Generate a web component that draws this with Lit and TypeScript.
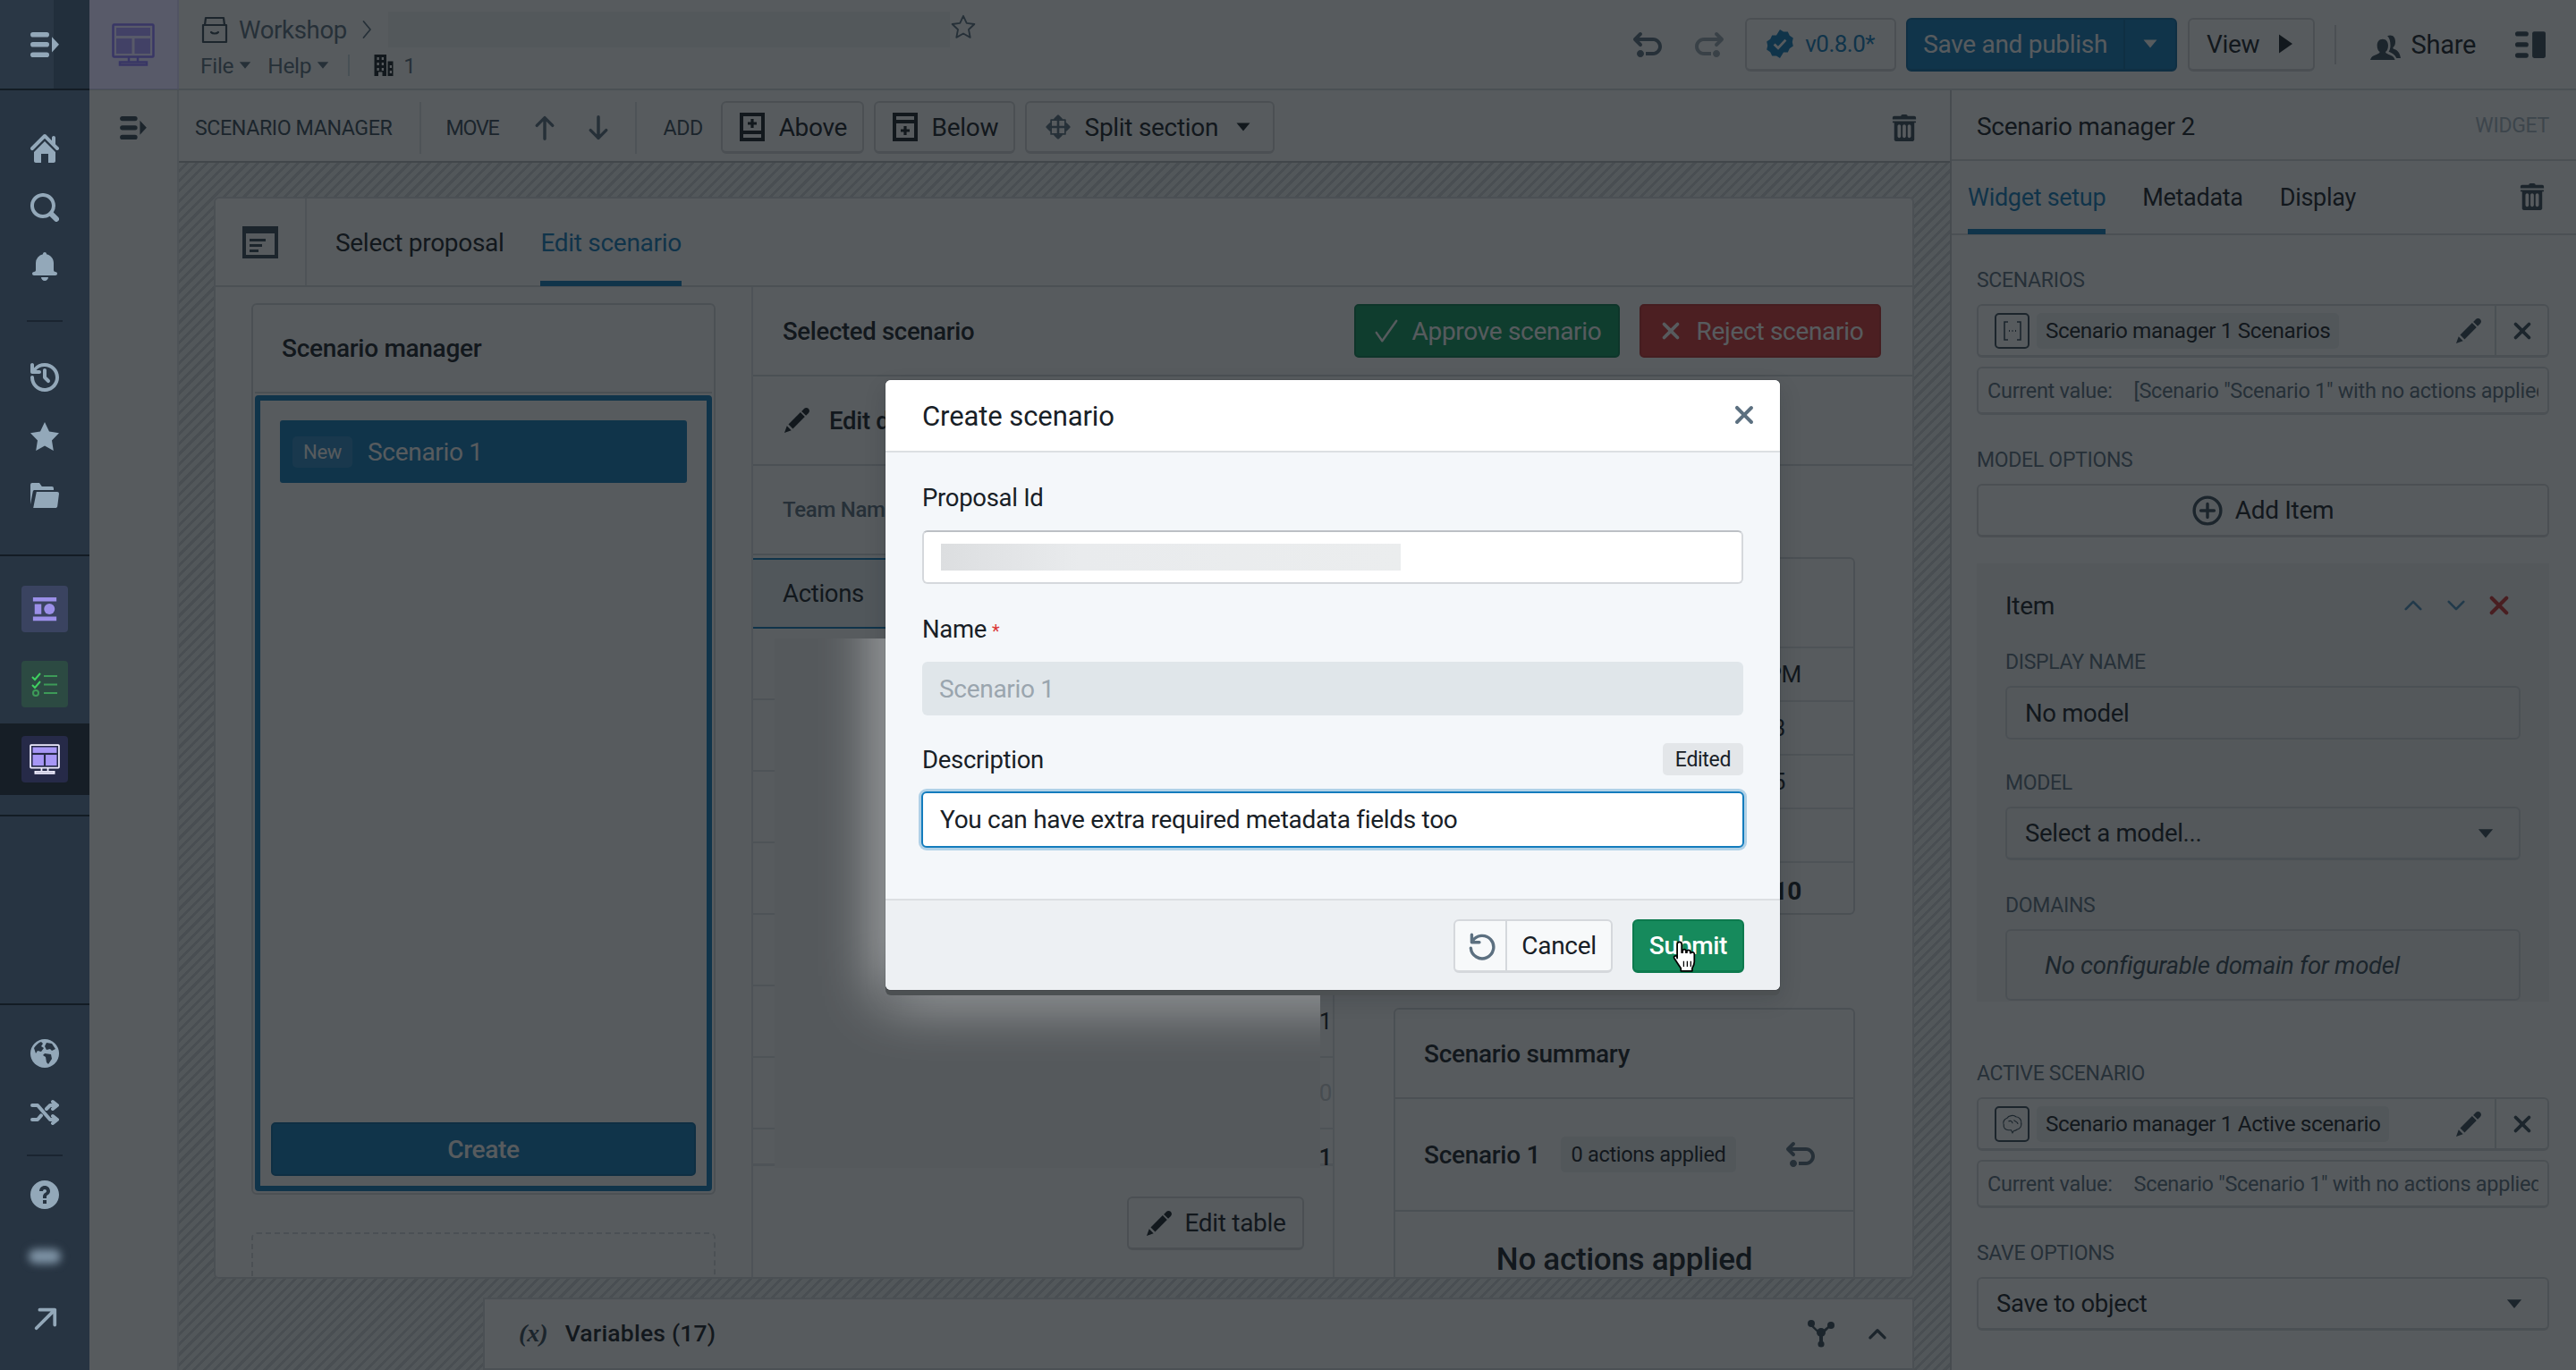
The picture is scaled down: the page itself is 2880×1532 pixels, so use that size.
import { LitElement, html, css } from "lit";
import { customElement } from "lit/decorators.js";

const P: Record<string, string> = {
  home: "M2 10v5c0 .55.45 1 1 1h3v-5h4v5h3c.55 0 1-.45 1-1v-5L8 4l-6 6zm13.71-2.71L14 5.59V2c0-.55-.45-1-1-1s-1 .45-1 1v1.59L8.71.29C8.53.11 8.28 0 8 0s-.53.11-.71.29l-7 7a1.003 1.003 0 001.42 1.42L8 2.41l6.29 6.29c.18.19.43.3.71.3a1.003 1.003 0 00.71-1.71z",
  search: "M15.55 13.43l-2.67-2.68a6.94 6.94 0 001.11-3.76c0-3.87-3.13-7-7-7s-7 3.13-7 7 3.13 7 7 7c1.39 0 2.68-.42 3.76-1.11l2.68 2.67a1.498 1.498 0 102.12-2.12zm-8.56-1.44c-2.76 0-5-2.24-5-5s2.24-5 5-5 5 2.24 5 5-2.24 5-5 5z",
  bell: "M8 16c1.1 0 2-.9 2-2H6c0 1.1.9 2 2 2zm6-5c-.55 0-1-.45-1-1V6c0-2.43-1.73-4.45-4.02-4.9 0-.04.02-.06.02-.1 0-.55-.45-1-1-1S7 .45 7 1c0 .04.02.06.02.1A4.992 4.992 0 003 6v4c0 .55-.45 1-1 1s-1 .45-1 1 .45 1 1 1h12c.55 0 1-.45 1-1s-.45-1-1-1z",
  history: "M8 3c-.55 0-1 .45-1 1v4c0 .28.11.53.29.71l2 2a1.003 1.003 0 001.42-1.42L9 7.59V4c0-.55-.45-1-1-1zm0-3a7.95 7.95 0 00-6 2.74V1c0-.55-.45-1-1-1S0 .45 0 1v4c0 .55.45 1 1 1h4c.55 0 1-.45 1-1s-.45-1-1-1H3.27A5.96 5.96 0 018 2c3.31 0 6 2.69 6 6 0 2.97-2.16 5.43-5 5.9v-.01c-.33.05-.66.11-1 .11-3.31 0-6-2.69-6-6 0-.55-.45-1-1-1s-1 .45-1 1c0 4.42 3.58 8 8 8 .34 0 .67-.06 1-.1v.04c3.94-.49 7-3.84 7-7.94 0-4.42-3.58-8-8-8z",
  star: "M8 0l2.5 5.3 5.5.8-4 4.1.9 5.8L8 13.3 3.1 16l.9-5.8-4-4.1 5.5-.8z",
  folder: "M2 5h11V4a1 1 0 00-1-1H6.4L5 1H1a1 1 0 00-1 1v11l1.4-7.2A1 1 0 012 5zm13 1H3.4L1.6 15H14c.5 0 1-.4 1.1-.9L16 7a1 1 0 00-1-1z",
  help: "M8 0C3.58 0 0 3.58 0 8s3.58 8 8 8 8-3.58 8-8-3.58-8-8-8zM7 13h2v-2H7v2zm1-10C6.3 3 5 4.3 5 6h2c0-.6.4-1 1-1s1 .4 1 1c0 1-2 1-2 3v1h2V9c0-1 2-1 2-3 0-1.7-1.3-3-3-3z",
  undo: "M4 11c-1.1 0-2 .9-2 2s.9 2 2 2 2-.9 2-2-.9-2-2-2zm7-7H3.41L4.7 2.71c.19-.18.3-.43.3-.71a1.003 1.003 0 00-1.71-.71l-3 3C.11 4.47 0 4.72 0 5c0 .28.11.53.29.71l3 3a1.003 1.003 0 001.42-1.42L3.41 6H11c1.65 0 3 1.35 3 3s-1.35 3-3 3H7v2h4c2.76 0 5-2.24 5-5s-2.24-5-5-5z",
  pencil: "M3.25 10.26l2.47 2.47 6.69-6.69-2.46-2.48-6.7 6.7zM.99 14.99l3.86-1.39-2.46-2.44-1.4 3.83zm12.25-14c-.48 0-.92.2-1.24.51l-1.44 1.44 2.47 2.47 1.44-1.44c.32-.32.51-.75.51-1.24.01-.95-.77-1.74-1.74-1.74z",
  trash: "M14.49 3.99h-13c-.28 0-.5.22-.5.5s.22.5.5.5h.5v10c0 .55.45 1 1 1h10c.55 0 1-.45 1-1v-10h.5c.28 0 .5-.22.5-.5s-.22-.5-.5-.5zm-8.5 9c0 .55-.45 1-1 1s-1-.45-1-1v-6c0-.55.45-1 1-1s1 .45 1 1v6zm3 0c0 .55-.45 1-1 1s-1-.45-1-1v-6c0-.55.45-1 1-1s1 .45 1 1v6zm3 0c0 .55-.45 1-1 1s-1-.45-1-1v-6c0-.55.45-1 1-1s1 .45 1 1v6zm2-12h-4c0-.55-.45-1-1-1h-2c-.55 0-1 .45-1 1h-4c-.55 0-1 .45-1 1v1h14v-1c0-.55-.45-1-1-1z",
  close: "M9.41 8l3.29-3.29c.19-.18.3-.43.3-.71a1.003 1.003 0 00-1.71-.71L8 6.59l-3.29-3.3a1.003 1.003 0 00-1.42 1.42L6.59 8 3.3 11.29c-.19.18-.3.43-.3.71a1.003 1.003 0 001.71.71L8 9.41l3.29 3.29c.18.19.43.3.71.3a1.003 1.003 0 00.71-1.71L9.41 8z",
  caret: "M3 5h10L8 11z",
  play: "M4 1l10 7-10 7z",
  people: "M9.5 13c-.5-.2-1.3-.3-1.5-1.2.9-.5 1.4-1.8 1.4-3.3C9.4 6.300 8.300 5 6.500 5S3.600 6.300 3.600 8.500c0 1.500.5 2.800 1.400 3.300-.2.9-1 1-1.500 1.200C2 13.600.5 14 0 16h13c-.5-2-2-2.400-3.500-3zM13 10.500c-.5-.2-1-.3-1.100-1 .8-.5 1.300-1.600 1.300-3C13.200 4.300 12.200 3 10.500 3c-.6 0-1.100.1-1.500.4 1 1 1.600 2.500 1.600 5 0 1.300-.3 2.400-.9 3.300 1.800.7 3.300 1.700 4.100 3.300H16c-.4-2.500-1.500-3.900-3-4.500z",
  building: "M1 0h9v16H7v-3H4v3H1zM3 2v2h1.500V2zm3.500 0v2H8V2zM3 6v2h1.500V6zm3.500 0v2H8V6zM3 10v2h1.500v-2zm3.500 0v2H8v-2zM11 5h4v11h-4zM12.500 8v2H14V8zm0 4v2H14v-2z",
  badge: "M8 0l2 1.300 2.400-.1 1 2.200 2 1.300-.5 2.300.5 2.300-2 1.300-1 2.200-2.400-.1L8 16l-2-1.300-2.400.1-1-2.200-2-1.300.5-2.300-.5-2.300 2-1.300 1-2.200 2.400.1z",
};

const icon = (n: string, cls = "") =>
  html`<svg class="ic ${cls}" viewBox="0 0 16 16"><path fill-rule="evenodd" d=${P[n]}></path></svg>`;

const drawer = (cls = "") => html`<svg class="ic ${cls}" viewBox="0 0 16 14">
  <rect x="0" y="0" width="10.500" height="2.800" rx="1.400"></rect>
  <rect x="0" y="5.500" width="10.500" height="2.800" rx="1.400"></rect>
  <rect x="0" y="11.200" width="10.500" height="2.800" rx="1.400"></rect>
  <path d="M12 2.600 L16 6.900 L12 11.200z"></path></svg>`;

const monitor = (cls = "") => html`<svg class="mon ${cls}" viewBox="0 0 48 48">
  <rect class="o" x="1.500" y="1.500" width="45" height="36" rx="1"></rect>
  <rect class="f" x="5" y="5" width="38" height="9"></rect>
  <rect class="f" x="5" y="17" width="17.500" height="17"></rect>
  <rect class="f" x="25.500" y="17" width="17.500" height="17"></rect>
  <path class="o" d="M19 38v5.500M29 38v5.500M9 43.500h30v3H9z"></path></svg>`;

const strokes = (d: string, cls = "", w = 2) =>
  html`<svg class="st ${cls}" viewBox="0 0 16 16" stroke-width=${w}><path d=${d}></path></svg>`;

const addIcon = (below: boolean) => html`<svg class="ic s32" viewBox="0 0 16 16">
  <path fill-rule="evenodd" d=${below
    ? "M1 0h14v16H1zM3 6v8h10V6zM3 2v2h10V2z M7.200 7.500h1.600v1.700h1.700v1.600H8.800v1.700H7.200v-1.700H5.500V9.200h1.700z"
    : "M1 0h14v16H1zM3 2v8h10V2zM3 12v2h10v-2z M7.200 3.500h1.600v1.700h1.700v1.600H8.800v1.700H7.200V6.800H5.500V5.200h1.700z"}></path></svg>`;

@customElement("app-root")
export class AppRoot extends LitElement {
  static styles = css`
    :host { display: flex; width: 2880px; height: 1532px; overflow: hidden; background: #fff; color: #182026;
      font-family: "Roboto", "Liberation Sans", sans-serif; font-size: 28px; letter-spacing: -0.3px; }
    * { box-sizing: border-box; }
    .ic { fill: currentColor; flex: none; display: block; width: 28px; height: 28px; }
    .st { fill: none; stroke: currentColor; stroke-linecap: round; stroke-linejoin: round; flex: none; display: block; width: 28px; height: 28px; }
    .s16 { width: 16px; height: 16px; } .s20 { width: 20px; height: 20px; } .s24 { width: 24px; height: 24px; }
    .s30 { width: 30px; height: 30px; } .s32 { width: 32px; height: 32px; }
    .flip { transform: scaleX(-1); }

    .rail { width: 100px; flex: none; background: #273442; color: #93a8b9; display: flex; flex-direction: column; align-items: center; }
    .rail-top { height: 101px; width: 100%; border-bottom: 2px solid #131c24; display: flex; align-items: center; justify-content: center; background: linear-gradient(90deg, #2a3745 60%, #222f3c 60%); }
    .rail-top .ic { width: 32px; height: 28px; }
    .rail-sec { width: 100%; display: flex; flex-direction: column; align-items: center; }
    .nav { height: 66px; display: flex; align-items: center; justify-content: center; width: 100%; }
    .nav .ic { width: 32px; height: 32px; }
    .r-sep { width: 40px; height: 2px; background: #1a2430; margin: 2px 0; }
    .r-line { width: 100%; height: 2px; background: #131c24; }
    .tile { width: 52px; height: 52px; border-radius: 4px; display: flex; align-items: center; justify-content: center; }
    .t-purple { background: #3a4360; color: #9b8fe8; }
    .t-green { background: #2c4a42; }
    .t-active { background: #262a48; }
    .active-row { width: 100%; height: 80px; background: #161e26; display: flex; align-items: center; justify-content: center; }
    .blur-dot { width: 36px; height: 16px; border-radius: 8px; background: #7e93a5; filter: blur(5px); }

    .main { flex: 1; min-width: 0; position: relative; display: flex; flex-direction: column; }
    .header { height: 101px; border-bottom: 2px solid #d8dbde; display: flex; align-items: stretch; flex: none; }
    .logo { width: 100px; border-right: 2px solid #e4e4ea; display: flex; align-items: center; justify-content: center; }
    .mon { width: 48px; height: 48px; display: block; }
    .mon .o { fill: none; stroke: #8b7cf0; stroke-width: 2.500; }
    .mon .f { fill: #8b7cf0; opacity: .7; }
    .mon.s-mon { width: 34px; height: 34px; }
    .s-mon .o { stroke: #efedff; }
    .s-mon .f { fill: #a797f5; opacity: 1; }
    .crumbs { padding: 15px 0 0 24px; display: flex; flex-direction: column; gap: 7px; color: #5c7080; width: 862px; flex: none; }
    .crumb1 { display: flex; align-items: center; gap: 11px; height: 36px; font-size: 27.500px; }
    .crumb2 { display: flex; align-items: center; gap: 6px; height: 30px; font-size: 24.500px; }
    .crumb2 .b { display: flex; align-items: center; margin-right: 9px; gap: 3px; }
    .crumb2 .vs { width: 2px; height: 24px; background: #ced9e0; margin: 0 20px 0 3px; }
    .crumb2 .bd { color: #182026; }
    .crumb2 .one { margin-left: 4px; }
    .box-ic { width: 32px; height: 32px; color: #394b59; }
    .hblur { flex: 1; height: 40px; background: #f2f3f4; }
    .star-wrap { width: 30px; flex: none; display: flex; justify-content: center; padding-top: 15px; color: #5c7080; }
    .hright { margin-left: auto; display: flex; align-items: center; padding-right: 34px; }
    .btn { display: flex; align-items: center; justify-content: center; border: 2px solid #d5d8db; border-bottom-width: 3px; border-radius: 6px; background: #fff; height: 60px; gap: 12px; font-size: 28px; flex: none; }
    .gh { color: #5c7080; margin-right: 37px; }
    .gh.flip { opacity: .6; margin-right: 0; }
    .ver { width: 169px; color: #137cbd; margin-left: 24px; gap: 12px; letter-spacing: -0.5px; font-size: 26px; }
    .primary { width: 303px; margin-left: 11px; background: #137cbd; color: #fff; border-color: #106ba3; padding: 0; justify-content: flex-start; gap: 0; overflow: hidden; }
    .primary .t { flex: 1; text-align: center; }
    .primary .c { width: 58px; align-self: stretch; border-left: 2px solid #106ba3; display: flex; align-items: center; justify-content: center; }
    .view { width: 142px; margin-left: 12px; gap: 16px; }
    .hvs { width: 2px; height: 44px; background: #d5d8db; margin: 0 38px 0 22px; }
    .share { display: flex; align-items: center; gap: 12px; margin-right: 44px; font-size: 29px; }
    .share .ic { color: #394b59; width: 34px; height: 34px; }
    .panel-ic { color: #394b59; width: 34px; height: 30px; }

    .body { flex: 1; display: flex; min-height: 0; }
    .col2 { width: 100px; flex: none; border-right: 2px solid #e1e4e6; display: flex; justify-content: center; padding-top: 29px; color: #394b59; }
    .col2 .ic { width: 32px; height: 26px; }
    .center { width: 1980px; flex: none; display: flex; flex-direction: column; min-height: 0; }
    .tools { height: 79px; flex: none; display: flex; align-items: center; padding: 4px 36px 0 18px; color: #394b59; }
    .tlabel { font-size: 23.200px; letter-spacing: -0.4px; color: #394b59; }
    .mv { letter-spacing: -1.200px; }
    .tsep { width: 2px; height: 58px; background: #e1e4e6; margin: 0 31px; flex: none; }
    .tsep.s1 { margin-right: 27px; }
    .tsep.s2 { margin-left: 27px; margin-right: 30px; }
    .tools .st { width: 28px; height: 28px; color: #5c7080; }
    .g37 { width: 37px; flex: none; } .g32 { width: 32px; flex: none; }
    .tbtn { height: 59px; margin-right: 11px; color: #182026; gap: 14px; }
    .ca { width: 160px; margin-left: 20px; } .cb { width: 158px; } .cc { width: 279px; color: #182026; gap: 16px; }
    .tools .trash { margin-left: auto; width: 30px; height: 32px; color: #394b59; }
    .canvas { flex: 1; min-height: 0; padding: 38px 40px 0 39px; display: flex; flex-direction: column; gap: 21px; overflow: hidden;
      border-top: 2px solid #b5b9bd;
      background: repeating-linear-gradient(135deg, #eff0f1 0 5px, #d0d3d6 5px 8px); }
    .card { height: 1210px; flex: none; background: #fff; border: 2px solid #d8dbde; border-radius: 6px; display: flex; flex-direction: column; overflow: hidden; }
    .card-tabs { height: 99px; flex: none; border-bottom: 2px solid #d8dbde; display: flex; }
    .form-ic { width: 102px; border-right: 2px solid #e1e4e6; display: flex; align-items: center; justify-content: center; color: #394b59; }
    .form-svg { width: 40px; height: 36px; }
    .tab { display: flex; align-items: center; height: 100%; padding-top: 2px; font-size: 28px; position: relative; flex: none; }
    .tab1 { margin-left: 32px; } .tab2 { margin-left: 41px; color: #137cbd; }
    .tab2::after, .rt-act::after { content: ""; position: absolute; left: 0; right: 0; bottom: -1px; height: 6px; background: #137cbd; }
    .card-body { flex: 1; display: flex; min-height: 0; }
    .cl { width: 601px; flex: none; border-right: 2px solid #e1e4e6; padding: 18px 40px 0 40px; display: flex; flex-direction: column; gap: 42px; }
    .sm { height: 997px; flex: none; border: 2px solid #d8dbde; border-radius: 6px; display: flex; flex-direction: column; padding: 0 2px 2px; }
    .sm-h { height: 99px; flex: none; display: flex; align-items: center; padding-left: 30px; font-weight: 500; font-size: 28px; border-bottom: 2px solid #d8dbde; }
    .focus { flex: 1; margin-top: 2px; border: 6px solid #137cbd; border-radius: 4px; padding: 22px 12px 11px; display: flex; flex-direction: column; justify-content: space-between; }
    .row { margin: 0 10px; height: 70px; background: #137cbd; border-radius: 3px; color: #fff; display: flex; align-items: center; padding-left: 14px; gap: 17px; font-size: 28px; }
    .new { font-size: 22px; padding: 5px 12px; background: rgba(255,255,255,.12); border-radius: 5px; }
    .create { height: 60px; background: #137cbd; border: 2px solid #106ba3; border-radius: 5px; color: #fff; display: flex; align-items: center; justify-content: center; font-size: 28px; font-weight: 500; }
    .dash { height: 200px; flex: none; border: 2px dashed #d8dbde; border-radius: 6px; display: flex; justify-content: center; padding-top: 44px; font-size: 26px; }
    .cr { flex: 1; min-width: 0; display: flex; flex-direction: column; }
    .cr-r { flex: none; display: flex; align-items: center; padding-left: 33px; border-bottom: 2px solid #d8dbde; }
    .h100 { height: 100px; } .team { height: 100px; color: #5c7080; font-size: 24px; font-weight: 500; }
    .strong { font-weight: 500; font-size: 27.500px; }
    .ed { margin-left: 20px; }
    .appr { margin-left: auto; height: 60px; width: 297px; background: #0f9960; color: #fff; border: 2px solid #0d8050; border-radius: 5px; display: flex; align-items: center; justify-content: center; gap: 14px; font-size: 28px; white-space: nowrap; }
    .rej { margin: 0 35px 0 22px; height: 60px; width: 270px; background: #db3737; color: #fff; border: 2px solid #c23030; border-radius: 5px; display: flex; align-items: center; justify-content: center; gap: 14px; font-size: 28px; white-space: nowrap; }
    .cr-b { flex: 1; display: flex; min-height: 0; }
    .tbl { width: 650px; flex: none; border-right: 2px solid #e1e4e6; display: flex; flex-direction: column; }
    .gap3 { height: 3px; flex: none; }
    .acts { height: 79px; flex: none; border-top: 2px solid #137cbd; border-bottom: 2px solid #137cbd; background: #ebf1f5; display: flex; align-items: center; padding-left: 33px; font-size: 27.500px; }
    .tr { height: 80px; flex: none; border-bottom: 2px solid #e1e4e6; display: flex; align-items: center; justify-content: flex-end; padding-right: 1px; font-size: 26px; }
    .tr.faint { color: #c8ccd0; }
    .tr.last { height: 41px; align-items: flex-start; padding-top: 16px; border-bottom-width: 3px; font-weight: 500; }
    .edit-t { align-self: flex-end; margin: 34px 32px 0 0; width: 198px; height: 60px; gap: 12px; }
    .sc { flex: 1; padding: 102px 64px 0 66px; display: flex; flex-direction: column; gap: 104px; }
    .pn { border: 2px solid #d8dbde; border-radius: 6px; flex: none; }
    .pn1 { height: 400px; overflow: hidden; }
    .pr { height: 60px; border-bottom: 2px solid #e1e4e6; display: flex; align-items: center; justify-content: flex-end; padding-right: 58px; font-size: 26px; }
    .pr.h { height: 100px; } .pr.a { padding-right: 76px; } .pr.t { font-weight: 700; height: 62px; border: 0; font-size: 28px; }
    .pn2 { height: 400px; }
    .pn2 .a { height: 100px; display: flex; align-items: center; padding-left: 32px; border-bottom: 2px solid #d8dbde; font-weight: 500; font-size: 28px; }
    .pn2 .b { height: 126px; display: flex; align-items: center; padding-left: 32px; border-bottom: 2px solid #d8dbde; font-weight: 500; font-size: 28px; }
    .tagc { margin-left: 23px; height: 40px; width: 196px; background: #eef0f2; border-radius: 5px; font-size: 23.500px; font-weight: 400; display: flex; align-items: center; justify-content: center; white-space: nowrap; }
    .pn2 .ic { margin-left: 56px; width: 32px; height: 32px; color: #5c7080; }
    .pn2 .c { text-align: center; font-weight: 500; font-size: 35px; padding-top: 33px; }
    .vars { width: 1600px; height: 81px; flex: none; align-self: flex-end; background: #fff; border: 2px solid #d8dbde; display: flex; align-items: center; padding: 0 26px 2px 38px; }
    .vx { font-family: "Liberation Serif", serif; font-style: italic; font-weight: 700; font-size: 28px; margin-right: 19px; color: #394b59; letter-spacing: 0; }
    .vt { font-weight: 500; font-size: 26.500px; letter-spacing: .2px; }
    .vars .hub { margin-left: auto; color: #394b59; width: 32px; height: 32px; }
    .vars .st { margin-left: 34px; color: #394b59; width: 26px; height: 26px; }

    .rp { width: 700px; flex: none; min-width: 0; overflow: hidden; border-left: 2px solid #c9cdd1; display: flex; flex-direction: column; min-height: 0; }
    .rp-h { height: 79px; flex: none; border-bottom: 2px solid #d8dbde; display: flex; align-items: center; padding: 4px 30px 0 28px; font-size: 28px; }
    .rp-h .w { margin-left: auto; color: #a7b6c2; font-size: 23px; margin-top: -2px; }
    .rp-t { height: 83px; flex: none; display: flex; border-bottom: 2px solid #d8dbde; padding-left: 18px; align-items: stretch; font-size: 27px; }
    .rt { display: flex; align-items: center; position: relative; margin-right: 41px; padding-bottom: 0; }
    .rt-act { color: #137cbd; }
    .rp-t .ic { margin: 24px 34px 0 auto; width: 30px; height: 32px; color: #394b59; }
    .rp-c { padding: 39px 30px 0 28px; display: flex; flex-direction: column; min-width: 0; }
    .lb { height: 24px; line-height: 24px; font-size: 23px; color: #5c7080; letter-spacing: -0.3px; margin-bottom: 14px; }
    .mt39 { margin-top: 39px; } .mt37 { margin-top: 37px; } .mt69 { margin-top: 69px; }
    .field { height: 60px; border: 2px solid #d8dbde; border-bottom-width: 3px; border-radius: 6px; display: flex; align-items: center; }
    .fic { width: 39px; height: 40px; border: 2px solid #394b59; border-radius: 5px; margin: 0 8px 0 18px; display: flex; align-items: center; justify-content: center; flex: none; color: #394b59; }
    .fic svg { width: 24px; height: 26px; display: block; }
    .chip { height: 40px; background: #eef0f2; border-radius: 5px; display: flex; align-items: center; padding: 0 10px; font-size: 24.300px; letter-spacing: -0.4px; white-space: nowrap; }
    .fe { margin-left: auto; color: #394b59; width: 32px; height: 32px; margin-right: 13px; }
    .fx { width: 59px; align-self: stretch; border-left: 2px solid #d8dbde; display: flex; align-items: center; justify-content: center; color: #394b59; }
    .cur { margin-top: 10px; height: 54px; border: 2px solid #d8dbde; border-bottom-width: 3px; border-radius: 6px; display: flex; align-items: center; padding: 0 10px; gap: 24px; color: #5c7080; font-size: 23.500px; white-space: nowrap; overflow: hidden; letter-spacing: -0.3px; }
    .cur .ov { overflow: hidden; flex: 1; min-width: 0; }
    .addi { height: 60px; width: 100%; gap: 14px; }
    .addi .st { width: 34px; height: 34px; color: #394b59; }
    .item { margin-top: 29px; height: 490px; background: #f3f5f6; padding: 32px 32px 0 32px; display: flex; flex-direction: column; }
    .it { height: 30px; display: flex; align-items: center; font-size: 28px; }
    .it .st { width: 22px; height: 22px; margin-left: 26px; color: #4f8fbd; }
    .it .st.first { margin-left: auto; }
    .it .st.x { color: #d03535; margin-right: 13px; }
    .inp { height: 60px; border: 2px solid #d8dbde; border-radius: 6px; background: #f3f5f6; display: flex; align-items: center; padding: 0 20px; font-size: 27.500px; }
    .inp.clear { background: transparent; }
    .sel { border-bottom-width: 3px; justify-content: space-between; padding-right: 24px; }
    .sel .ic { color: #394b59; width: 26px; height: 26px; }
    .dom { height: 80px; border: 2px solid #d8dbde; border-radius: 6px; display: flex; align-items: center; padding-left: 42px; font-style: italic; color: #394b59; font-size: 27.500px; }

    .ov-layer { position: absolute; inset: 0; background: rgba(16, 22, 26, .7); display: flex; align-items: center; justify-content: center; }
    .tint { position: absolute; left: 0; top: 0; width: 100px; height: 100px; background: rgba(110, 90, 255, .07); }
    .smudge { position: absolute; left: 766px; top: 714px; width: 610px; height: 592px; overflow: hidden; background: #55595c; }
    .smudge i { position: absolute; left: 120px; top: -100px; width: 700px; height: 500px; background: rgba(255,255,255,.64); filter: blur(34px); display: block; }

    .modal { width: 1000px; height: 682px; position: relative; background: #f4f7fa; border-radius: 6px; box-shadow: 0 0 0 1px rgba(16,22,26,.1), 0 6px 0 #4c5052, 0 10px 24px rgba(16,22,26,.15); display: flex; flex-direction: column; overflow: hidden; }
    .m-h { height: 81px; flex: none; background: #fff; border-bottom: 2px solid #dcdfe2; display: flex; align-items: center; padding: 2px 24px 0 41px; font-size: 31px; letter-spacing: -0.1px; justify-content: space-between; }
    .m-h .ic { color: #5c7080; width: 32px; height: 32px; margin-top: -4px; }
    .m-b { flex: 1; padding: 0 41px; display: flex; flex-direction: column; }
    .ml { font-size: 27.500px; height: 34px; display: flex; align-items: center; justify-content: space-between; flex: none; }
    .ml.m33 { margin-top: 33px; } .ml.m32 { margin-top: 32px; }
    .ml b { color: #db3737; font-weight: 400; font-size: 20px; margin: -8px 0 0 6px; }
    .minp { height: 60px; border: 2px solid #d5d8dc; border-top-color: #bcc0c5; background: #fff; border-radius: 6px; display: flex; align-items: center; padding-left: 19px; font-size: 28px; margin-top: 20px; flex: none; }
    .mblur { width: 514px; height: 30px; background: linear-gradient(90deg, #dcdee0, #e9ebed 30%, #ebedee); }
    .mdis { background: #e0e6ea; border: 0; color: #9aa5ae; margin-top: 20px; height: 60px; }
    .edited { font-size: 23px; height: 36px; width: 90px; background: #e3e6e9; border-radius: 5px; display: flex; align-items: center; justify-content: center; }
    .mfoc { border: 2px solid #137cbd; box-shadow: 0 0 0 3px rgba(19,124,189,.3); margin-top: 19px; height: 63px; margin-left: -1px; margin-right: -1px; padding-left: 19px; }
    .m-f { height: 102px; flex: none; background: #edf0f3; border-top: 2px solid #dcdfe2; display: flex; align-items: center; justify-content: flex-end; padding: 2px 40px 0 0; }
    .grp { width: 178px; height: 60px; display: flex; border: 2px solid #d5d8dc; border-bottom-width: 3px; border-radius: 6px; background: #f7f9fa; }
    .grp .r { width: 58px; border-right: 2px solid #d5d8dc; display: flex; align-items: center; justify-content: center; color: #5c7080; }
    .grp .r .st { width: 34px; height: 34px; }
    .grp .c { flex: 1; display: flex; align-items: center; justify-content: center; font-size: 28px; }
    .submit { width: 125px; height: 60px; margin-left: 22px; border-radius: 6px; background: #168a5c; border: 2px solid #0d7a4e; border-bottom-width: 3px; color: #fff; display: flex; align-items: center; justify-content: center; font-size: 28px; font-weight: 500; }
    .hand { position: absolute; left: 878px; top: 626px; width: 32px; height: 38px; }
  `;

  private label(t: string, cls = "") { return html`<div class="lb ${cls}">${t}</div>`; }

  private rail() {
    return html`<div class="rail">
      <div class="rail-top">${drawer()}</div>
      <div class="rail-sec" style="padding-top:32px">
        <div class="nav">${icon("home")}</div>
        <div class="nav">${icon("search")}</div>
        <div class="nav">${icon("bell")}</div>
        <div style="height:25px"></div><div class="r-sep"></div>
        <div style="height:27px"></div>
        <div class="nav">${icon("history")}</div>
        <div class="nav">${icon("star")}</div>
        <div class="nav">${icon("folder")}</div>
      </div>
      <div style="height:33px"></div><div class="r-line"></div>
      <div class="rail-sec" style="padding-top:33px;gap:32px">
        <div class="tile t-purple"><svg class="ic s30" viewBox="0 0 16 16"><path d="M1 1h14v2.500H1zM1 12.500h14V15H1zM2 5h4v6H2z"></path><circle cx="10.800" cy="8" r="3.200"></circle></svg></div>
        <div class="tile t-green"><svg viewBox="0 0 32 28" width="32" height="28" fill="none" stroke-width="2"><path d="M2 6l3 3 6-7M2 15l3 3 6-7" stroke="#3fd060"></path><circle cx="6" cy="24" r="3" stroke="#3d9a58"></circle><path d="M15 5h15M15 14.500h15M15 24h15" stroke="#3d9a58"></path></svg></div>
      </div>
      <div class="active-row" style="margin-top:18px"><div class="tile t-active">${monitor("s-mon")}</div></div>
      <div style="height:22px"></div><div class="r-line"></div>
      <div style="height:209px"></div><div class="r-line"></div>
      <div class="rail-sec" style="padding-top:21px">
        <div class="nav"><svg class="ic s32" viewBox="0 0 16 16"><circle cx="8" cy="8" r="8"></circle><path fill="#273442" d="M2 5c1-1.500 2.500-3 4-3.500l1 1-1 1.500 1.500 1L6 7 4 6.500 3 8zM9 2l3 .5 2 3-2 1-1-1-2 .5-1-2zM8 8l3.500.5L12 11l-2 3-1-1-.5-3L7 9z"></path></svg></div>
        <div class="nav">${strokes("M1 4h3l7 8h3M1 12h3l2-2.300M9 6l2-2h3M12.500 2L15 4l-2.500 2M12.500 10l2.500 2-2.500 2", "s32")}</div>
        <div style="height:12px"></div><div class="r-sep"></div>
        <div class="nav" style="margin-top:8px">${icon("help")}</div>
        <div class="nav" style="height:72px"><div class="blur-dot"></div></div>
        <div class="nav">${strokes("M3 14L14 3M5 3h9v9", "s30", 2)}</div>
      </div>
    </div>`;
  }

  private header() {
    return html`<div class="header">
      <div class="logo">${monitor()}</div>
      <div class="crumbs">
        <div class="crumb1">
          <svg class="st box-ic" viewBox="0 0 16 16" stroke-width="1.100"><path d="M1.500 5.500h13V15h-13zM2.500 5.500L3 1.500h10l.5 4M6 9.500c.8 1 3.200 1 4 0"></path></svg>
          <span>Workshop</span>${strokes("M5 2l5 6-5 6", "s24", 1.200)}
          <div class="hblur"></div>
        </div>
        <div class="crumb2">
          <span class="b">File${icon("caret", "s20")}</span>
          <span class="b">Help${icon("caret", "s20")}</span>
          <span class="vs"></span>
          <span class="bd">${icon("building", "s24")}</span><span class="one">1</span>
        </div>
      </div>
      <div class="star-wrap">${strokes("M8 1.500l2 4.300 4.600.6-3.400 3.200.9 4.700L8 12l-4.100 2.300.9-4.700L1.400 6.400 6 5.800z", "s30", 1)}</div>
      <div class="hright">
        <div class="gh">${icon("undo", "s32")}</div>
        <div class="gh flip">${icon("undo", "s32")}</div>
        <div class="btn ver">
          <svg class="ic s32" viewBox="0 0 16 16"><path d=${P.badge}></path><path d="M4.800 8.200l2.200 2.200 4.200-4.600" fill="none" stroke="#fff" stroke-width="1.400"></path></svg>
          <span>v0.8.0*</span>
        </div>
        <div class="btn primary"><span class="t">Save and publish</span><span class="c">${icon("caret", "s24")}</span></div>
        <div class="btn view"><span>View</span>${icon("play", "s24")}</div>
        <div class="hvs"></div>
        <div class="share">${icon("people")}<span>Share</span></div>
        <svg class="ic panel-ic" viewBox="0 0 16 14"><rect x="0" y="0" width="7" height="2.500" rx="1.200"></rect><rect x="0" y="5.700" width="7" height="2.500" rx="1.200"></rect><rect x="0" y="11.400" width="7" height="2.500" rx="1.200"></rect><rect x="9" y="0" width="7" height="14" rx="1"></rect></svg>
      </div>
    </div>`;
  }

  private toolbar() {
    return html`<div class="tools">
      <span class="tlabel">SCENARIO MANAGER</span><span class="tsep s1"></span>
      <span class="tlabel mv">MOVE</span>
      <span class="g37"></span>${strokes("M8 15V1.500M3 6.500l5-5 5 5")}
      <span class="g32"></span>${strokes("M8 1v13.500M3 9.500l5 5 5-5")}
      <span class="tsep s2"></span>
      <span class="tlabel">ADD</span>
      <div class="btn tbtn ca">${addIcon(false)}<span>Above</span></div>
      <div class="btn tbtn cb">${addIcon(true)}<span>Below</span></div>
      <div class="btn tbtn cc">
        <svg class="st s32" viewBox="0 0 16 16" stroke-width="1.500"><path d="M8 1v14M1 8h14M6 3l2-2 2 2M6 13l2 2 2-2M3 6L1 8l2 2M13 6l2 2-2 2"></path><rect x="3.500" y="3.500" width="9" height="9" stroke-width="1"></rect></svg>
        <span>Split section</span>${icon("caret", "s24")}
      </div>
      ${icon("trash", "trash")}
    </div>`;
  }

  private card() {
    return html`<div class="card">
      <div class="card-tabs">
        <div class="form-ic"><svg class="ic form-svg" viewBox="0 0 20 18"><path fill-rule="evenodd" d="M0 0h20v18H0zM2 4v12h16V4zM4 7h9v1.500H4zM4 10h7v1.500H4zM4 13h5v1.500H4z"></path></svg></div>
        <div class="tab tab1">Select proposal</div>
        <div class="tab tab2">Edit scenario</div>
      </div>
      <div class="card-body">
        <div class="cl">
          <div class="sm">
            <div class="sm-h">Scenario manager</div>
            <div class="focus">
              <div class="row"><span class="new">New</span><span>Scenario 1</span></div>
              <div class="create">Create</div>
            </div>
          </div>
          <div class="dash">Add widget</div>
        </div>
        <div class="cr">
          <div class="cr-r h100">
            <span class="strong">Selected scenario</span>
            <div class="appr">${strokes("M2 9l3.500 5L14 2", "s30", 1.300)}<span>Approve scenario</span></div>
            <div class="rej">${icon("close", "s30")}<span>Reject scenario</span></div>
          </div>
          <div class="cr-r h100">${icon("pencil", "s32")}<span class="strong ed">Edit data</span></div>
          <div class="cr-b">
            <div class="tbl">
              <div class="cr-r team">Team Name</div>
              <div class="gap3"></div>
              <div class="acts">Actions</div>
              <div class="tr"></div><div class="tr"></div><div class="tr"></div><div class="tr"></div><div class="tr"></div>
              <div class="tr">1</div><div class="tr faint">0</div>
              <div class="tr last">1</div>
              <div class="btn edit-t">${icon("pencil", "s32")}<span>Edit table</span></div>
            </div>
            <div class="sc">
              <div class="pn pn1">
                <div class="pr h"></div>
                <div class="pr">12:00 PM</div>
                <div class="pr a">13</div>
                <div class="pr a">15</div>
                <div class="pr"></div>
                <div class="pr t">110</div>
              </div>
              <div class="pn pn2">
                <div class="a">Scenario summary</div>
                <div class="b"><span>Scenario 1</span><span class="tagc">0 actions applied</span>${icon("undo")}</div>
                <div class="c">No actions applied</div>
              </div>
            </div>
          </div>
        </div>
      </div>
    </div>`;
  }

  private side() {
    return html`<div class="rp">
      <div class="rp-h"><span>Scenario manager 2</span><span class="w">WIDGET</span></div>
      <div class="rp-t">
        <div class="rt rt-act">Widget setup</div><div class="rt">Metadata</div><div class="rt">Display</div>
        ${icon("trash")}
      </div>
      <div class="rp-c">
        ${this.label("SCENARIOS")}
        <div class="field">
          <div class="fic"><svg viewBox="0 0 24 26" fill="none" stroke="currentColor" stroke-width="1.600"><path d="M7 3H3v20h4M17 3h4v20h-4"></path><path d="M8 13h1M11.500 13h1M15 13h1" stroke-width="2"></path></svg></div>
          <div class="chip">Scenario manager 1 Scenarios</div>
          ${icon("pencil", "fe")}<div class="fx">${icon("close", "s30")}</div>
        </div>
        <div class="cur"><span>Current value:</span><span class="ov">[Scenario "Scenario 1" with no actions applied]</span></div>
        ${this.label("MODEL OPTIONS", "mt39")}
        <div class="btn addi"><svg class="st" viewBox="0 0 16 16" stroke-width="1.600"><circle cx="8" cy="8" r="7"></circle><path d="M8 4.500v7M4.500 8h7"></path></svg><span>Add Item</span></div>
        <div class="item">
          <div class="it"><span>Item</span>${strokes("M2 11l6-6 6 6", "first", 2)}${strokes("M2 5l6 6 6-6", "", 2)}${strokes("M2 2l12 12M14 2L2 14", "x", 3)}</div>
          ${this.label("DISPLAY NAME", "mt37")}
          <div class="inp">No model</div>
          ${this.label("MODEL", "mt37")}
          <div class="inp sel"><span>Select a model...</span>${icon("caret")}</div>
          ${this.label("DOMAINS", "mt39")}
          <div class="dom">No configurable domain for model</div>
        </div>
        ${this.label("ACTIVE SCENARIO", "mt69")}
        <div class="field">
          <div class="fic"><svg viewBox="0 0 16 16" fill="none" stroke="currentColor" stroke-width=".8"><path d="M8 14.500l-1-2H5c-2 0-4-1.500-3.500-4C.5 6.500 2 4 4 3.500 5 1.500 9 1 10.500 2.500c2.500 0 4.500 2.500 4 5 .5 2-1 4-3 4.500-1 .8-2 1-2.500 1zM5 6c1.500-1 3 0 3 1.500M9 5c1 1.500 3 1 3 3"></path></svg></div>
          <div class="chip">Scenario manager 1 Active scenario</div>
          ${icon("pencil", "fe")}<div class="fx">${icon("close", "s30")}</div>
        </div>
        <div class="cur"><span>Current value:</span><span class="ov">Scenario "Scenario 1" with no actions applied</span></div>
        ${this.label("SAVE OPTIONS", "mt39")}
        <div class="inp sel clear"><span>Save to object</span>${icon("caret")}</div>
      </div>
    </div>`;
  }

  private modal() {
    return html`<div class="modal">
      <div class="m-h"><span>Create scenario</span>${icon("close")}</div>
      <div class="m-b">
        <div class="ml m33">Proposal Id</div>
        <div class="minp"><div class="mblur"></div></div>
        <div class="ml m33"><span>Name<b>*</b></span></div>
        <div class="minp mdis">Scenario 1</div>
        <div class="ml m32"><span>Description</span><span class="edited">Edited</span></div>
        <div class="minp mfoc">You can have extra required metadata fields too</div>
      </div>
      <div class="m-f">
        <div class="grp"><div class="r">${strokes("M3.500 2v4h4M3.800 5.500A6 6 0 113 9", "", 1.600)}</div><div class="c">Cancel</div></div>
        <div class="submit">Submit</div>
      </div>
      <svg class="hand" viewBox="0 0 20 24"><path fill="#fff" stroke="#000" stroke-width="1.100" stroke-linejoin="round" d="M6 1.500c1 0 1.600.7 1.600 1.600V9h.6V7.500c.5-1 2-1 2.400 0V9h.6V8c.5-1 2-1 2.400 0v1.200h.6c.6-.8 2-.5 2.300.6v5.700c0 2-.8 3.200-1.500 4.500v2H7v-2c-1.400-2-3-4.500-4.700-7-.7-1.100.8-2.300 1.800-1.400L4.400 13V3.100c0-.9.700-1.600 1.600-1.600z"></path><path stroke="#000" stroke-width=".8" d="M9 15v4M11.500 15v4M14 15v4"></path></svg>
    </div>`;
  }

  render() {
    return html`${this.rail()}
      <div class="main">
        ${this.header()}
        <div class="body">
          <div class="col2">${drawer()}</div>
          <div class="center">
            ${this.toolbar()}
            <div class="canvas">
              ${this.card()}
              <div class="vars"><span class="vx">(x)</span><span class="vt">Variables (17)</span>
                <svg class="ic hub" viewBox="0 0 16 16"><circle cx="2.500" cy="2.500" r="2"></circle><circle cx="13.500" cy="3.500" r="2"></circle><circle cx="8" cy="7.500" r="2.500"></circle><circle cx="8" cy="14" r="1.800"></circle><path d="M2 2l5.500 5.500L13 3l.8.8L9 8.500V14H7V8.500L1.200 3z"></path></svg>
                ${strokes("M3 11l5-5 5 5", "", 2)}
              </div>
            </div>
          </div>
          ${this.side()}
        </div>
        <div class="ov-layer">
          <div class="tint"></div>
          <div class="smudge"><i></i></div>
          ${this.modal()}
        </div>
      </div>`;
  }
}
